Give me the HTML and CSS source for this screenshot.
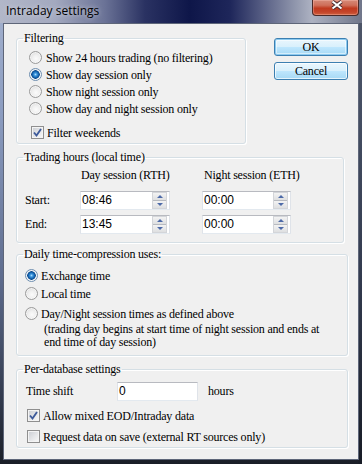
FILE: index.html
```html
<!DOCTYPE html>
<html>
<head>
<meta charset="utf-8">
<title>Intraday settings</title>
<link rel="stylesheet" href="styles.css">
</head>
<body>
<div class="window">
  <div class="titlebar">
    <span class="title">Intraday settings</span>
    <div class="close">
      <svg width="16" height="10" viewBox="0 0 16 10"><path d="M3.5 1.5L12.5 8.5M12.5 1.5L3.5 8.5" stroke="#40252a" stroke-width="3.8"/><path d="M3.5 1.5L12.5 8.5M12.5 1.5L3.5 8.5" stroke="#fff" stroke-width="2.1"/></svg>
    </div>
  </div>
  <div class="client">
    <div class="top-row">
      <fieldset class="group filtering">
        <legend>Filtering</legend>
        <div class="filter-body">
          <div class="opt"><span class="radio"></span>Show 24 hours trading (no filtering)</div>
          <div class="opt"><span class="radio on"></span>Show day session only</div>
          <div class="opt"><span class="radio"></span>Show night session only</div>
          <div class="opt"><span class="radio"></span>Show day and night session only</div>
          <div class="opt chk-row"><span class="check"><svg width="11" height="11" viewBox="0 0 11 11"><path d="M2 5.5L4.5 8.5L9 2" fill="none" stroke="#3d5a9a" stroke-width="1.9"/></svg></span>Filter weekends</div>
        </div>
      </fieldset>
      <div class="buttons">
        <div class="btn default">OK</div>
        <div class="btn">Cancel</div>
      </div>
    </div>

    <fieldset class="group trading">
      <legend>Trading hours (local time)</legend>
      <div class="trading-body">
        <div class="th-row head">
          <div class="cell-label"></div>
          <div class="cell-a">Day session (RTH)</div>
          <div class="cell-b">Night session (ETH)</div>
        </div>
        <div class="th-row time first">
          <div class="cell-label">Start:</div>
          <div class="cell-a"><div class="spin-input"><span class="val">08:46</span><span class="spin"><span class="up"></span><span class="down"></span></span></div></div>
          <div class="cell-b"><div class="spin-input"><span class="val">00:00</span><span class="spin"><span class="up"></span><span class="down"></span></span></div></div>
        </div>
        <div class="th-row time">
          <div class="cell-label">End:</div>
          <div class="cell-a"><div class="spin-input"><span class="val">13:45</span><span class="spin"><span class="up"></span><span class="down"></span></span></div></div>
          <div class="cell-b"><div class="spin-input"><span class="val">00:00</span><span class="spin"><span class="up"></span><span class="down"></span></span></div></div>
        </div>
      </div>
    </fieldset>

    <fieldset class="group daily">
      <legend>Daily time-compression uses:</legend>
      <div class="daily-body">
        <div class="opt r1"><span class="radio on"></span>Exchange time</div>
        <div class="opt r2"><span class="radio"></span>Local time</div>
        <div class="opt r3"><span class="radio"></span>Day/Night session times as defined above</div>
        <div class="note">(trading day begins at start time of night session and ends at<br>end time of day session)</div>
      </div>
    </fieldset>

    <fieldset class="group perdb">
      <legend>Per-database settings</legend>
      <div class="perdb-body">
        <div class="shift-row">
          <span class="shift-label">Time shift</span>
          <div class="text-input"><span class="val">0</span></div>
          <span class="hours">hours</span>
        </div>
        <div class="opt c1"><span class="check"><svg width="11" height="11" viewBox="0 0 11 11"><path d="M2 5.5L4.5 8.5L9 2" fill="none" stroke="#3d5a9a" stroke-width="1.9"/></svg></span>Allow mixed EOD/Intraday data</div>
        <div class="opt c2"><span class="check"></span>Request data on save (external RT sources only)</div>
      </div>
    </fieldset>
  </div>
</div>
</body>
</html>
```

FILE: styles.css
```css
* { box-sizing: border-box; }
html, body { margin: 0; padding: 0; }
body {
  width: 362px;
  height: 464px;
  overflow: hidden;
  font-family: "Liberation Serif", "Times New Roman", serif;
  font-size: 12px;
  letter-spacing: -0.2px;
  color: #000;
}
.window {
  width: 362px;
  height: 464px;
  display: flex;
  flex-direction: column;
  background:
    linear-gradient(90deg, rgba(0,0,0,0) 358px, rgba(22,26,36,.6) 359px),
    linear-gradient(180deg, #a4b2cf 0, #8b9cc0 25%, #5e6c8e 60%, #2e3648 88%, #1a1e27 100%);
}
.titlebar {
  height: 23px;
  display: flex;
  justify-content: space-between;
  align-items: flex-start;
  background: linear-gradient(90deg, #b2b7c8 0, #a3a9bf 55px, #6a7296 105px, #2a3262 145px, #0e1649 190px, #1e265a 230px, #5b6287 265px, #959bb0 298px, #adb2c2 312px, #70768a 362px);
}
.title {
  font-family: "Open Sans", "Noto Sans", sans-serif;
  font-size: 12px;
  letter-spacing: 0;
  line-height: 14px;
  margin: 4px 0 0 4px;
  padding: 0 2px;
  color: #000;
  text-shadow: 0 0 5px rgba(235,238,245,.75);
}
.close {
  width: 47px;
  height: 16px;
  margin-right: 3px;
  border: 1px solid #4a2a28;
  border-top: none;
  border-radius: 0 0 4px 4px;
  background: linear-gradient(180deg, #d68a78 0, #cf6f5a 35%, #c03a1f 55%, #c4442a 80%, #d0623f 100%);
  box-shadow: inset 0 0 0 1px rgba(255,200,190,.35);
  display: flex;
  justify-content: center;
  align-items: flex-start;
  padding: 0 0 0 3px;
}
.close svg { display: block; }

.client {
  flex: 1;
  margin: 0 3px 4px;
  background: #f0f0f0;
  border: 1px solid #5e6679;
  padding: 7px 0 0 12px;
}

.top-row {
  display: flex;
  align-items: flex-start;
}
.group {
  margin: 0;
  padding: 0;
  min-width: 0;
  border: 1px solid #d5dfe5;
  border-radius: 3px;
  box-shadow: inset 1px 1px 0 #fff, 1px 1px 0 #fff;
}
.group legend {
  margin-left: 6px;
  padding: 0 1px;
  height: 14px;
  line-height: 14px;
}
.filtering { width: 230px; }
.filter-body { padding: 4px 0 2px 12px; }
.opt {
  display: flex;
  align-items: center;
  height: 17px;
  line-height: 14px;
  white-space: nowrap;
}
.filter-body .radio { margin-right: 4px; }
.filter-body .chk-row { margin-top: 7px; padding-left: 2px; }
.filter-body .check { margin-right: 3px; }

.radio {
  flex: none;
  width: 13px;
  height: 13px;
  border-radius: 50%;
  border: 1px solid #9a9a9a;
  background: radial-gradient(circle at 55% 60%, #fbfbfb 0, #f0f0f0 40%, #d2d2d2 100%);
  box-shadow: inset 0 0 0 1px rgba(255,255,255,.6);
}
.radio.on {
  border-color: #6f8fb0;
  background:
    radial-gradient(circle at 50% 50%, #a8dcff 0, #3b95dc 1.5px, #1565b1 3px, #0e4b8c 4px, rgba(14,75,140,0) 4.6px),
    radial-gradient(circle at 55% 60%, #fbfbfb 0, #eef2f6 40%, #cfd6de 100%);
}
.check {
  flex: none;
  width: 13px;
  height: 13px;
  border: 1px solid #8f8f8f;
  background: linear-gradient(135deg, #c9ccd2 0, #e6e7e9 55%, #fafafa 100%);
  box-shadow: inset 0 0 0 1px #f4f4f4;
  display: flex;
  align-items: center;
  justify-content: center;
}
.check svg { display: block; }

.buttons {
  margin-left: 28px;
  margin-top: 7px;
  display: flex;
  flex-direction: column;
  gap: 6px;
}
.btn {
  width: 74px;
  height: 18px;
  border: 1px solid #3c7fb1;
  border-radius: 3px;
  background: linear-gradient(180deg, #eaf6fd 0, #d9f0fc 48%, #bee6fd 52%, #a7d9f5 100%);
  box-shadow: inset 0 0 0 1px rgba(255,255,255,.7);
  text-align: center;
  line-height: 16px;
}
.btn.default {
  box-shadow: inset 0 0 0 1px #8ccaf0, inset 0 0 0 2px rgba(255,255,255,.5);
}

.trading { width: 328px; margin-top: 6px; }
.trading-body { padding: 4px 0 8px 8px; }
.th-row { display: flex; white-space: nowrap; }
.th-row.head { height: 14px; line-height: 14px; }
.th-row.time { height: 19px; line-height: 19px; margin-top: 5px; }
.th-row.time.first { margin-top: 9px; }
.cell-label { width: 55px; flex: none; }
.cell-a { width: 122px; flex: none; }
.cell-b { width: 89px; flex: none; }
.head .cell-a { padding-left: 1px; }
.head .cell-b { padding-left: 2px; }

.spin-input, .text-input {
  height: 19px;
  background: #fff;
  border: 1px solid;
  border-color: #b8bac0 #dfe3e9 #e3e9ef #dfe3e9;
  display: flex;
  align-items: center;
  font-family: "Liberation Sans", Arial, sans-serif;
  font-size: 12px;
  letter-spacing: 0;
}
.spin-input { width: 90px; }
.cell-b .spin-input { width: 89px; }
.val { flex: 1; padding-left: 1px; line-height: 17px; }
.spin {
  width: 15px;
  height: 17px;
  margin-right: 2px;
  display: flex;
  flex-direction: column;
  border: 1px solid #d3d5d9;
  background: #e7e8ea;
}
.spin .up, .spin .down {
  flex: 1;
  display: flex;
  justify-content: center;
  align-items: center;
  background: linear-gradient(180deg, #f3f3f3, #dedfe1);
}
.spin .up { border-bottom: 1px solid #b7bac0; }
.spin .up::after {
  content: "";
  border-left: 3px solid transparent;
  border-right: 3px solid transparent;
  border-bottom: 3px solid #4d6aa8;
}
.spin .down::after {
  content: "";
  border-left: 3px solid transparent;
  border-right: 3px solid transparent;
  border-top: 3px solid #4d6aa8;
}

.daily { width: 332px; margin-top: 4px; }
.daily-body { padding: 6px 0 6px 8px; }
.daily-body .radio { margin-right: 3px; }
.daily-body .r2 { margin-top: 1px; }
.daily-body .r3 { margin-top: 3px; }
.note {
  margin-top: 1px;
  padding-left: 19px;
  line-height: 13px;
  white-space: nowrap;
}

.perdb { width: 332px; margin-top: 6px; }
.perdb-body { padding: 6px 0 2px 9px; }
.shift-row {
  display: flex;
  align-items: center;
  height: 19px;
}
.shift-label { width: 91px; }
.text-input { width: 81px; }
.text-input .val { padding-left: 1px; }
.hours { margin-left: 10px; }
.perdb-body .opt { padding-left: 1px; }
.perdb-body .check { margin-right: 3px; }
.perdb-body .c1 { margin-top: 6px; }
.perdb-body .c2 { margin-top: 4px; }
```
